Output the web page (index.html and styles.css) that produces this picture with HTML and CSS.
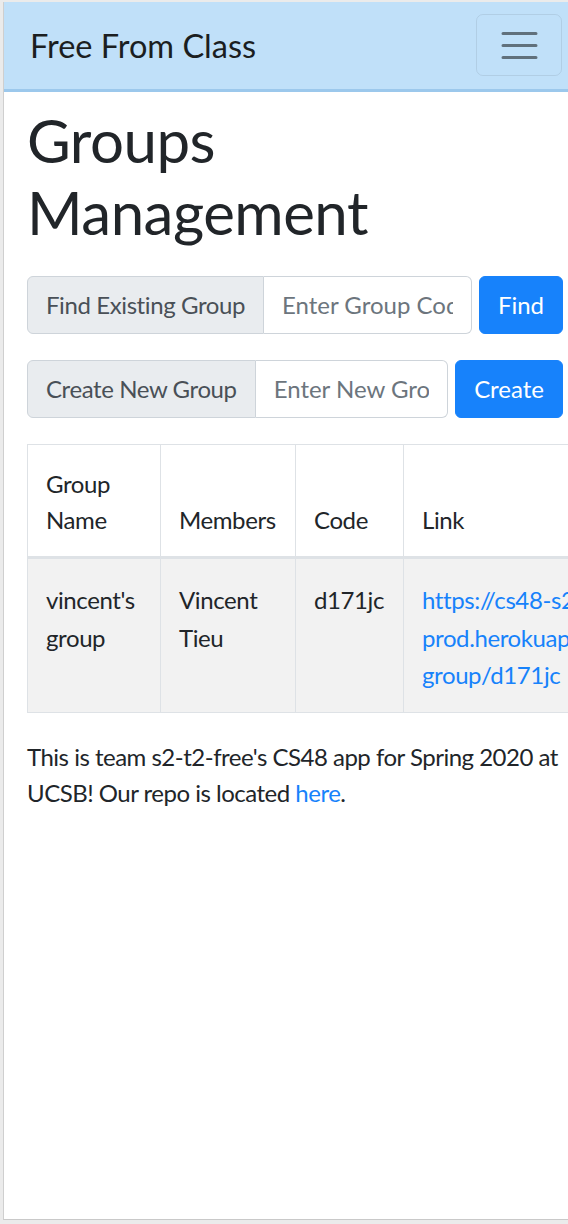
FILE: index.html
```html
<!DOCTYPE html>
<html lang="en">
<head>
<meta charset="utf-8">
<title>Free From Class</title>
<link rel="stylesheet" href="styles.css">
</head>
<body>
<div class="device">
  <nav class="navbar">
    <a class="brand" href="#">Free From Class</a>
    <button class="toggler" type="button" aria-label="Toggle navigation">
      <svg width="45" height="45" viewBox="0 0 30 30" aria-hidden="true">
        <path d="M4 7h22M4 15h22M4 23h22" stroke="rgba(0,0,0,0.5)" stroke-width="2" stroke-linecap="round" fill="none"/>
      </svg>
    </button>
  </nav>
  <main class="container">
    <h1 class="title">Groups Management</h1>
    <form class="row-form">
      <div class="input-group">
        <span class="addon">Find Existing Group</span>
        <input class="field" type="text" placeholder="Enter Group Code">
      </div>
      <button class="btn" type="button">Find</button>
    </form>
    <form class="row-form">
      <div class="input-group">
        <span class="addon">Create New Group</span>
        <input class="field" type="text" placeholder="Enter New Group Name">
      </div>
      <button class="btn" type="button">Create</button>
    </form>
    <table class="groups">
      <colgroup>
        <col class="c1"><col class="c2"><col class="c3"><col class="c4">
      </colgroup>
      <thead>
        <tr><th>Group Name</th><th>Members</th><th>Code</th><th>Link</th></tr>
      </thead>
      <tbody>
        <tr>
          <td>vincent's group</td>
          <td>Vincent Tieu</td>
          <td>d171jc</td>
          <td><a href="#">https://cs48-s20-s2-t2-<br>prod.herokuapp.com/<br>group/d171jc</a></td>
        </tr>
      </tbody>
    </table>
    <p class="note">This is team s2-t2-free's CS48 app for Spring 2020 at<br>UCSB! Our repo is located <a href="#">here</a>.</p>
  </main>
</div>
</body>
</html>
```
FILE: styles.css
```css
html, body {
  margin: 0;
  padding: 0;
  height: 100%;
  overflow: hidden;
  background: #ebebeb;
}

body {
  font-family: Lato, "Noto Sans", sans-serif;
  font-size: 24px;
  line-height: 36px;
  letter-spacing: -0.4px;
  color: #212529;
}

.device {
  margin: 2px 0 0 3px;
  width: 680px;
  height: 1217px;
  background: #ffffff;
  border-left: 1px solid #cfcfcf;
  border-bottom: 1px solid #c9c9c9;
  overflow: hidden;
}

.navbar {
  display: flex;
  align-items: center;
  justify-content: space-between;
  box-sizing: border-box;
  width: 564px;
  height: 90px;
  padding: 0 6px 1px 26px;
  background: #c0e0f9;
  border-bottom: 3px solid #9cc8ec;
}

.brand {
  font-size: 32.5px;
  line-height: 45px;
  letter-spacing: 0;
  color: #1b1e21;
  text-decoration: none;
}

.toggler {
  display: flex;
  align-items: center;
  justify-content: center;
  width: 86px;
  height: 62px;
  padding: 0;
  background: transparent;
  border: 1px solid rgba(0, 0, 0, 0.08);
  border-radius: 7px;
}

.container {
  padding: 0 23px;
  width: 536px;
}

.title {
  margin: 0 0 28px;
  padding-top: 12px;
  font-size: 60px;
  line-height: 72px;
  font-weight: 400;
  letter-spacing: -0.5px;
}

.row-form {
  display: flex;
  gap: 7px;
  margin: 0 0 26px;
}

.input-group {
  display: flex;
  flex: 1;
  min-width: 0;
}

.addon {
  flex: none;
  padding: 10px 18px;
  background: #e9ecef;
  border: 1px solid #ced4da;
  border-radius: 6px 0 0 6px;
  color: #495057;
  white-space: nowrap;
}

.field {
  flex: 1;
  min-width: 0;
  margin: 0;
  padding: 10px 18px;
  border: 1px solid #ced4da;
  border-left: 0;
  border-radius: 0 6px 6px 0;
  font: inherit;
  color: #495057;
  background: #fff;
}

.field::placeholder {
  color: #6c757d;
}

.btn {
  flex: none;
  padding: 10px 18px;
  font: inherit;
  color: #fff;
  background: #1782fb;
  border: 1px solid #1782fb;
  border-radius: 6px;
}

.groups {
  table-layout: fixed;
  width: 700px;
  border-collapse: collapse;
  margin: 0 0 26px;
}

.c1 { width: 133px; }
.c2 { width: 135px; }
.c3 { width: 108px; }
.c4 { width: 324px; }

.groups th,
.groups td {
  border: 1px solid #dee2e6;
  text-align: left;
  font-weight: 400;
}

.groups th {
  padding: 21px 18px 18px;
  vertical-align: bottom;
  border-bottom: 3px solid #dee2e6;
}

.groups td {
  padding: 22px 18px 18px;
  line-height: 37.5px;
  vertical-align: top;
}

.groups tbody tr {
  background: #f2f2f2;
}

a {
  color: #1782fb;
  text-decoration: none;
}

.note {
  margin: 0;
  white-space: nowrap;
  letter-spacing: -0.5px;
}
```
